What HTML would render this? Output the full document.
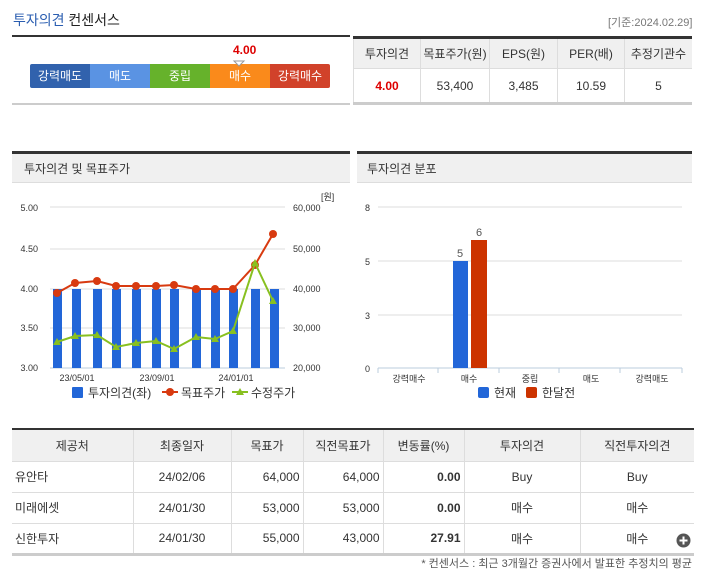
<!DOCTYPE html>
<html><head><meta charset="utf-8"><style>
*{margin:0;padding:0;box-sizing:border-box}
body{width:703px;height:581px;background:#fff;position:relative;overflow:hidden;font-family:"Liberation Sans","Noto Sans CJK KR",sans-serif;font-size:12px;color:#333}
.a{position:absolute}
.seg{position:absolute;top:64px;height:24px;width:60px;color:#fff;text-align:center;line-height:24px;font-size:12px}
table{border-collapse:collapse;position:absolute}
td{text-align:center;font-size:12px;color:#333}
</style></head><body>
<div class="a" style="left:13px;top:10px;font-size:14px;"><span style="color:#2a5db0">투자의견</span> <span style="color:#222">컨센서스</span></div>
<div class="a" style="left:608px;top:14px;font-size:11px;color:#777">[기준:2024.02.29]</div>
<div class="a" style="left:12px;top:35px;width:338px;height:2px;background:#333"></div>
<div class="a" style="left:12px;top:103px;width:338px;height:2px;background:#ccc"></div>
<div class="a" style="left:233px;top:43px;color:#d00;font-weight:bold;font-size:12px">4.00</div>
<div class="seg" style="left:30px;background:#3162ad;border-radius:2px 0 0 2px">강력매도</div>
<div class="seg" style="left:90px;background:#5a93e3">매도</div>
<div class="seg" style="left:150px;background:#66b22b">중립</div>
<div class="seg" style="left:210px;background:#fa8a1b">매수</div>
<div class="seg" style="left:270px;background:#d1422a;border-radius:0 2px 2px 0">강력매수</div>
<svg class="a" style="left:232px;top:60px" width="14" height="8"><path d="M2 1 L12 1 L7 6 Z" fill="#fff" stroke="#999"/></svg>

<table style="left:353px;top:36px;width:339px;border-top:3px solid #333;border-bottom:3px solid #ccc">
<tr style="background:#f0f0f0;height:31px"><td style="width:67px;border-left:1px solid #ddd">투자의견</td><td style="width:69px;border-left:1px solid #ddd">목표주가(원)</td><td style="width:68px;border-left:1px solid #ddd">EPS(원)</td><td style="width:67px;border-left:1px solid #ddd">PER(배)</td><td style="border-left:1px solid #ddd">추정기관수</td></tr>
<tr style="height:35px;border-top:1px solid #ddd"><td style="color:#d00;font-weight:bold;border-left:1px solid #ddd">4.00</td><td style="border-left:1px solid #ddd">53,400</td><td style="border-left:1px solid #ddd">3,485</td><td style="border-left:1px solid #ddd">10.59</td><td style="border-left:1px solid #ddd">5</td></tr>
</table>

<div class="a" style="left:12px;top:151px;width:338px;height:32px;background:#f0f0f0;border-top:3px solid #333;border-bottom:1px solid #ddd;padding:6px 0 0 12px">투자의견 및 목표주가</div>
<div class="a" style="left:357px;top:151px;width:335px;height:32px;background:#f0f0f0;border-top:3px solid #333;border-bottom:1px solid #ddd;padding:6px 0 0 10px">투자의견 분포</div>

<svg class="a" style="left:0;top:190px" width="350" height="215" font-family="Liberation Sans,Noto Sans CJK KR,sans-serif" font-size="9" fill="#333">
<g transform="translate(0,-190)">
<g stroke="#ddd"><line x1="50" y1="207" x2="285" y2="207"/><line x1="50" y1="249" x2="285" y2="249"/><line x1="50" y1="289" x2="285" y2="289"/><line x1="50" y1="328" x2="285" y2="328"/><line x1="50" y1="368" x2="285" y2="368" stroke="#bcd"/></g>
<g text-anchor="end"><text x="38" y="211">5.00</text><text x="38" y="252">4.50</text><text x="38" y="292">4.00</text><text x="38" y="331">3.50</text><text x="38" y="371">3.00</text></g>
<g><text x="293" y="211">60,000</text><text x="293" y="252">50,000</text><text x="293" y="292">40,000</text><text x="293" y="331">30,000</text><text x="293" y="371">20,000</text><text x="321" y="200">[원]</text></g>
<g fill="#2266d8">
<rect x="53" y="289" width="9" height="79"/><rect x="72" y="289" width="9" height="79"/><rect x="93" y="289" width="9" height="79"/><rect x="112" y="289" width="9" height="79"/><rect x="132" y="289" width="9" height="79"/><rect x="152" y="289" width="9" height="79"/><rect x="170" y="289" width="9" height="79"/><rect x="192" y="289" width="9" height="79"/><rect x="211" y="289" width="9" height="79"/><rect x="229" y="289" width="9" height="79"/><rect x="251" y="289" width="9" height="79"/><rect x="270" y="289" width="9" height="79"/></g>
<polyline fill="none" stroke="#d83a10" stroke-width="2" points="57,293 75,283 97,281 116,286 136,286 156,286 174,285 196,289 215,289 233,289 255,265 273,234"/>
<g fill="#d83a10"><circle cx="57" cy="293" r="4"/><circle cx="75" cy="283" r="4"/><circle cx="97" cy="281" r="4"/><circle cx="116" cy="286" r="4"/><circle cx="136" cy="286" r="4"/><circle cx="156" cy="286" r="4"/><circle cx="174" cy="285" r="4"/><circle cx="196" cy="289" r="4"/><circle cx="215" cy="289" r="4"/><circle cx="233" cy="289" r="4"/><circle cx="255" cy="265" r="4"/><circle cx="273" cy="234" r="4"/></g>
<polyline fill="none" stroke="#88c020" stroke-width="2" points="57,342 75,336 97,335 116,347 136,343 156,341 174,349 196,337 215,339 233,331 255,263 273,301"/>
<g fill="#88c020"><path d="M57,338l4,7h-8z M75,332l4,7h-8z M97,331l4,7h-8z M116,343l4,7h-8z M136,339l4,7h-8z M156,337l4,7h-8z M174,345l4,7h-8z M196,333l4,7h-8z M215,335l4,7h-8z M233,327l4,7h-8z M255,259l4,7h-8z M273,297l4,7h-8z"/></g>
<g text-anchor="middle"><text x="77" y="381">23/05/01</text><text x="157" y="381">23/09/01</text><text x="236" y="381">24/01/01</text></g>
<g font-size="12"><rect x="72" y="387" width="11" height="11" rx="1" fill="#2266d8"/><text x="88" y="397">투자의견(좌)</text>
<line x1="162" y1="392" x2="178" y2="392" stroke="#d83a10" stroke-width="2"/><circle cx="170" cy="392" r="4" fill="#d83a10"/><text x="181" y="397">목표주가</text>
<line x1="232" y1="392" x2="248" y2="392" stroke="#88c020" stroke-width="2"/><path d="M240,388l4,7h-8z" fill="#88c020"/><text x="251" y="397">수정주가</text></g>
</g></svg>

<svg class="a" style="left:350px;top:190px" width="353" height="215" font-family="Liberation Sans,Noto Sans CJK KR,sans-serif" font-size="9" fill="#333">
<g transform="translate(-350,-190)">
<g stroke="#ddd"><line x1="378" y1="207" x2="682" y2="207"/><line x1="378" y1="261" x2="682" y2="261"/><line x1="378" y1="315" x2="682" y2="315"/></g>
<line x1="378" y1="368" x2="682" y2="368" stroke="#bcd"/>
<g stroke="#bcd"><line x1="378" y1="368" x2="378" y2="373"/><line x1="438" y1="368" x2="438" y2="373"/><line x1="499" y1="368" x2="499" y2="373"/><line x1="559" y1="368" x2="559" y2="373"/><line x1="620" y1="368" x2="620" y2="373"/><line x1="682" y1="368" x2="682" y2="373"/></g>
<g text-anchor="end"><text x="370" y="211">8</text><text x="370" y="265">5</text><text x="370" y="319">3</text><text x="370" y="372">0</text></g>
<rect x="453" y="261" width="15" height="107" fill="#2266d8"/><rect x="471" y="240" width="16" height="128" fill="#cc3300"/>
<g text-anchor="middle" font-size="11" fill="#555"><text x="460" y="257">5</text><text x="479" y="236">6</text></g>
<g text-anchor="middle"><text x="409" y="382">강력매수</text><text x="469" y="382">매수</text><text x="530" y="382">중립</text><text x="591" y="382">매도</text><text x="652" y="382">강력매도</text></g>
<g font-size="12"><rect x="478" y="387" width="11" height="11" rx="2" fill="#2266d8"/><text x="494" y="397">현재</text><rect x="526" y="387" width="11" height="11" rx="2" fill="#cc3300"/><text x="542" y="397">한달전</text></g>
</g></svg>

<table style="left:12px;top:428px;width:682px;border-top:2px solid #333;border-bottom:3px solid #ccc">
<tr style="background:#f0f0f0;height:32px"><td style="width:121px">제공처</td><td style="width:98px;border-left:1px solid #ddd">최종일자</td><td style="width:72px;border-left:1px solid #ddd">목표가</td><td style="width:80px;border-left:1px solid #ddd">직전목표가</td><td style="width:81px;border-left:1px solid #ddd">변동률(%)</td><td style="width:116px;border-left:1px solid #ddd">투자의견</td><td style="border-left:1px solid #ddd">직전투자의견</td></tr>
<tr style="height:31px;border-top:1px solid #ddd"><td style="text-align:left;padding-left:3px">유안타</td><td style="border-left:1px solid #ddd">24/02/06</td><td style="border-left:1px solid #ddd;text-align:right;padding-right:3px">64,000</td><td style="border-left:1px solid #ddd;text-align:right;padding-right:3px">64,000</td><td style="border-left:1px solid #ddd;text-align:right;padding-right:3px;font-weight:bold">0.00</td><td style="border-left:1px solid #ddd">Buy</td><td style="border-left:1px solid #ddd">Buy</td></tr>
<tr style="height:31px;border-top:1px solid #ddd"><td style="text-align:left;padding-left:3px">미래에셋</td><td style="border-left:1px solid #ddd">24/01/30</td><td style="border-left:1px solid #ddd;text-align:right;padding-right:3px">53,000</td><td style="border-left:1px solid #ddd;text-align:right;padding-right:3px">53,000</td><td style="border-left:1px solid #ddd;text-align:right;padding-right:3px;font-weight:bold">0.00</td><td style="border-left:1px solid #ddd">매수</td><td style="border-left:1px solid #ddd">매수</td></tr>
<tr style="height:31px;border-top:1px solid #ddd"><td style="text-align:left;padding-left:3px">신한투자</td><td style="border-left:1px solid #ddd">24/01/30</td><td style="border-left:1px solid #ddd;text-align:right;padding-right:3px">55,000</td><td style="border-left:1px solid #ddd;text-align:right;padding-right:3px">43,000</td><td style="border-left:1px solid #ddd;text-align:right;padding-right:3px;font-weight:bold">27.91</td><td style="border-left:1px solid #ddd">매수</td><td style="border-left:1px solid #ddd">매수</td></tr>
</table>
<svg class="a" style="left:676px;top:533px" width="15" height="15"><circle cx="7.5" cy="7.5" r="7" fill="#555"/><path d="M7.5 3.5v8M3.5 7.5h8" stroke="#fff" stroke-width="2"/></svg>
<div class="a" style="right:11px;top:555px;font-size:11px;color:#555">* 컨센서스 : 최근 3개월간 증권사에서 발표한 추정치의 평균</div>
</body></html>
